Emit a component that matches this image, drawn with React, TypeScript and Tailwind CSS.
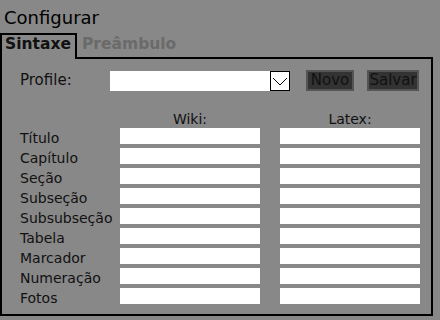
const fields = [
  'Título',
  'Capítulo',
  'Seção',
  'Subseção',
  'Subsubseção',
  'Tabela',
  'Marcador',
  'Numeração',
  'Fotos',
]

export default function App() {
  return (
    <div className="w-[440px] h-[320px] bg-[#888888] text-[#111111] font-['DejaVu_Sans',sans-serif] overflow-hidden">
      {/* Title */}
      <div className="h-[33px] pl-[4px] pt-[7px] text-[18px] leading-[21px] text-black">Configurar</div>

      {/* Tabs */}
      <div className="flex w-[433px] h-[26px]">
        <div className="w-[77px] h-[26px] border-2 border-b-0 border-black pl-[3px] text-[15.5px] leading-[18px] font-bold">
          Sintaxe
        </div>
        <div className="flex-1 h-[26px] border-b-2 border-black pl-[5px] pt-[2px] text-[15.5px] leading-[18px] font-bold text-[#6a6a6a]">
          Preâmbulo
        </div>
      </div>

      {/* Panel */}
      <div className="w-[433px] h-[257px] border-2 border-t-0 border-black pl-[18px] pt-[11px]">
        <div className="flex items-center h-[21px]">
          <span className="w-[90px] text-[15px] leading-[21px]">Profile:</span>
          <div className="flex h-[20px]">
            <div className="w-[160px] h-[20px] bg-white" />
            <div className="w-[20px] h-[20px] bg-white border border-black flex items-center justify-center">
              <svg width="18" height="12" viewBox="0 0 18 12" fill="none">
                <path d="M2 3 L9 10 L16 3" stroke="#000" strokeWidth="1" />
              </svg>
            </div>
          </div>
          <button className="ml-[16px] w-[48px] h-[21px] bg-[#333333] border-2 border-[#555555] text-[15px] leading-[17px] text-[#111111]">
            Novo
          </button>
          <button className="ml-[13px] w-[52px] h-[21px] bg-[#333333] border-2 border-[#555555] text-[15px] leading-[17px] text-[#111111]">
            Salvar
          </button>
        </div>

        <div className="flex mt-[20px] h-[17px] text-[14px] leading-[17px]">
          <div className="w-[100px]" />
          <div className="w-[140px] text-center">Wiki:</div>
          <div className="w-[20px]" />
          <div className="w-[140px] text-center">Latex:</div>
        </div>

        {fields.map((f) => (
          <div key={f} className="flex h-[20px]">
            <span className="w-[100px] text-[14px] leading-[20px] whitespace-nowrap">{f}</span>
            <input className="w-[140px] h-[16px] bg-white border-0 outline-none" />
            <div className="w-[20px]" />
            <input className="w-[140px] h-[16px] bg-white border-0 outline-none" />
          </div>
        ))}
      </div>
    </div>
  )
}
